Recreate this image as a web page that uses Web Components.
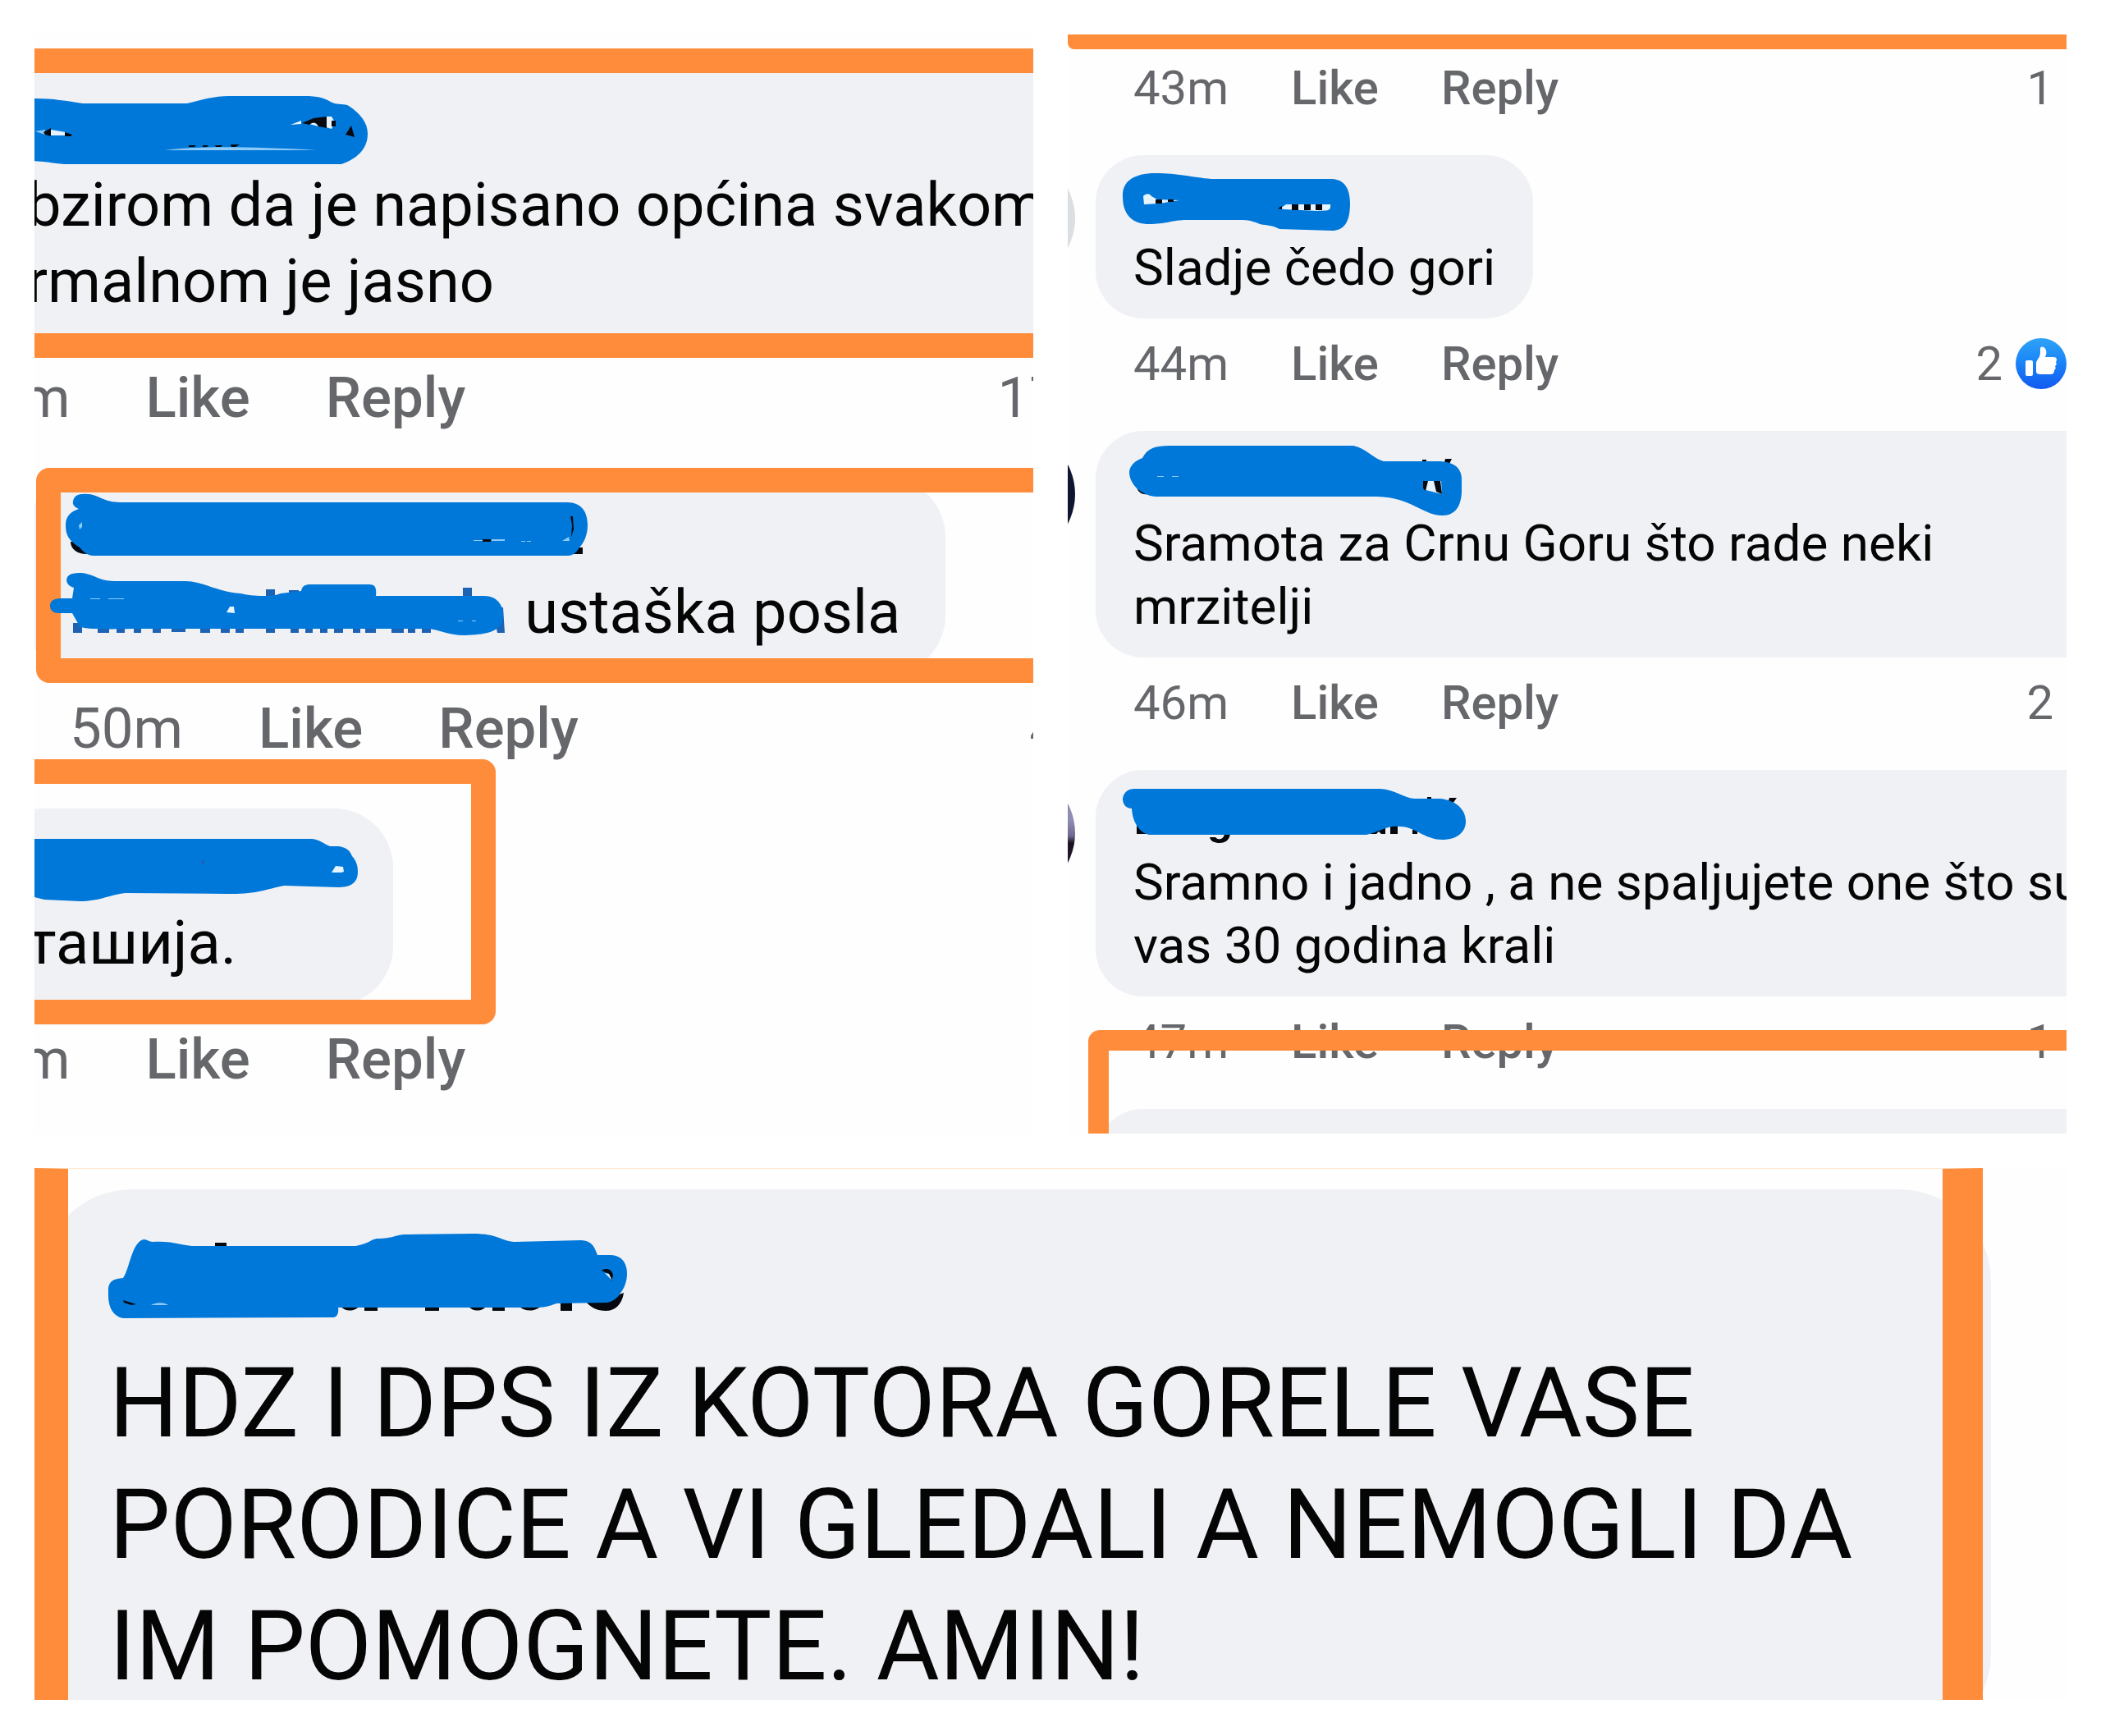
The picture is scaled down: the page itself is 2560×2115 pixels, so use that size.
<!DOCTYPE html>
<html lang="sr">
<head>
<meta charset="utf-8">
<title>Comments</title>
<style>
  body { margin: 0; background: #fff; font-family: Roboto, "Noto Sans", sans-serif; }
  .ink { display: block; overflow: visible; position: relative; z-index: 2; fill: #0078d9; }
  .ink.inline { display: inline-block; vertical-align: top; }
  .ink .k { fill: #06090f; }
  .ink .w { fill: #e6f4ff; }
  .ink .p { fill: #8ccbf7; }
  .ink .d { fill: #1e62b4; }
</style>
</head>
<body>
<comment-collage>
  <shot-panel size="m" style="--top:44px">
    <comment-item time="m" count="17" wide style="--indent:-64px;--meta-indent:47px;--f-top:-27px;--f-bottom:-17px;--f-left:-60px;--f-right:-160px" framed>
      <svg slot="name" class="ink" width="391" height="93" viewBox="33 110 391 93" aria-hidden="true">
        <path d="M30 121C50 118 76 122 101 126H228C245 122 260 117 279 117H370C388 117 394 119 405 125C412 128 420 126 425 129C440 139 448 150 448 163C448 182 434 194 416 200H85C62 200 64 196 30 196Z"/>
        <path class="p" d="M43 160L55 158V164Z"/><path class="w" d="M62 158L80 161V165L62 165Z"/><path class="k" d="M53 161L62 156V166L55 164ZM79 161L88 164L86 166H79Z"/>
        <path class="p" d="M200 183C235 178 300 178 386 183Z"/><path class="k" d="M230 177H239L237 179H230ZM247 177H254L252 179H247ZM262 177H271L269 179H263ZM281 176H292L287 179H282Z"/>
        <path class="w" d="M354 152L367 147V151ZM397 142H404L408 149L404 157L397 155ZM377 151C380 148 386 149 388 154Z"/><path class="k" d="M368 150L382 144L398 142V156L388 154C384 147 380 150 377 152ZM404 147H409V154H404ZM421 164L428 153L432 167Z"/>
      </svg>
      bzirom da je napisano općina svakom<br>rmalnom je jasno
    </comment-item>
    <comment-item time="50m" count="4" style="--indent:-12px;--f-top:-12px;--f-bottom:-10px;--f-left:2px;--f-right:-160px" framed>
      <svg slot="name" class="ink" width="640" height="93" viewBox="85 606 640 93" aria-hidden="true">
        <path class="k" d="M86 660H98L108 675C96 676 86 670 86 660ZM698 667H710V675H698Z"/>
        <path d="M89 611C90 604 95 602 101 602C112 601 118 605 126 608C133 611 140 612 150 612H691C709 612 716 624 716 640C716 652 711 662 706 667C701 675 697 677 691 677H113C104 676 100 670 97 667C84 659 80 652 80 640C80 632 83 624 96 620C91 618 88 615 89 611Z"/>
        <path class="p" d="M96 640L100 636V642L97 645ZM577 658H590V659H577ZM599 657H615V659H599ZM635 659H640V660H635ZM642 659H647V660H642ZM685 659L693 654L694 659Z"/><path class="k" d="M588 657H598V660H588ZM695 629H698L699 645L696 654L697 640Z"/>
      </svg>
      <svg class="ink inline" width="536" height="93" viewBox="85 699 536 93" aria-hidden="true">
        <path class="d" d="M89 759h11v12h-11zM119 759h14v12h-14zM142 759h10v12h-10zM163 759h9v12h-9zM186 759h10v12h-10zM209 759h17v11h-17zM244 759h12v12h-12zM269 759h11v12h-11zM287 759h10v12h-10zM324 759h11v12h-11zM354 759h10v12h-10zM372 759h9v12h-9zM390 759h9v12h-9zM407 759h11v12h-11zM430 759h9v12h-9zM445 759h13v12h-13zM477 759h15v12h-15zM497 759h9v12h-9zM514 759h11v12h-11zM600 740h13l2 31h-9zM324 718h11v12h-11zM352 719h12v8h-12zM564 716h11v14h-11z"/>
        <path d="M61 738C61 731 67 729 75 729H88L90 716C78 713 79 701 88 699C98 697 106 698 119 704C128 708 136 708 146 708H226C246 708 265 721 293 723C305 726 330 728 342 723L367 720C368 714 372 712 378 712H450C457 712 459 716 458 726H590C606 726 613 738 613 748C613 764 606 773 566 774C545 774 533 766 520 766H180C140 766 104 768 97 763L88 747H72C65 747 61 744 61 738Z"/>
        <path class="w" d="M276 746L280 739H285L286 747Z"/><path class="p" d="M110 729H122V730H110ZM132 729H151V730H132ZM558 756H564V757H558ZM575 756H580V757H575Z"/>
      </svg>
      ustaška posla
    </comment-item>
    <comment-item time="m" style="--indent:-64px;--meta-indent:47px;--f-top:-60px;--f-bottom:-23px;--f-left:-60px;--f-right:655px" framed>
      <svg slot="name" class="ink" width="391" height="93" viewBox="33 1009 391 93" aria-hidden="true">
        <path d="M30 1022H380C390 1023 394 1028 402 1031C410 1031 424 1029 429 1043C435 1050 436 1056 436 1062C436 1078 424 1081 412 1081L346 1079C325 1083 312 1090 275 1089L153 1088C130 1091 121 1098 97 1098L54 1096L30 1090Z"/>
        <path class="w" d="M404 1063L409 1055L418 1056L419 1062L416 1063Z"/><path class="d" d="M245 1050L249 1047V1054Z"/>
      </svg>
      ташија.
    </comment-item>
  </shot-panel>

  <shot-panel size="s" style="--top:10px" capped>
    <comment-item time="43m" count="1" style="--indent:34px" bare></comment-item>
    <comment-item time="44m" count="2" liked avatar style="--indent:-145px;--avatar:#dcdfe2">
      <svg slot="name" class="ink" width="280" height="77" viewBox="1381 210 280 77" aria-hidden="true">
        <path d="M1368 240C1367 222 1380 211 1408 211C1436 211 1452 216 1476 218H1623C1640 219 1645 232 1645 248C1645 270 1638 281 1623 281L1559 279C1550 274 1545 275 1535 273C1527 269 1520 268 1510 268H1443C1425 269 1420 273 1400 273C1375 273 1368 256 1368 240Z"/>
        <path class="w" d="M1393 239C1396 236 1400 235 1403 239L1410 243L1437 244L1412 248L1394 249Z"/><path class="k" d="M1408 243H1416V248H1408ZM1423 243H1430V246H1423Z"/>
        <path class="w" d="M1560 254L1567 249H1621C1622 258 1617 256 1605 257L1564 255Z"/><path class="k" d="M1557 254L1562 251V255ZM1574 249H1582V256H1574ZM1589 249H1597V256H1589ZM1603 249H1611V256H1603Z"/>
      </svg>
      Sladje čedo gori
    </comment-item>
    <comment-item time="46m" count="2" avatar wide style="--indent:-145px;--avatar:#101631">
      <svg slot="name" class="ink" width="400" height="77" viewBox="1381 546 400 77" aria-hidden="true">
        <path class="k" d="M1385 594L1398 602C1392 603 1387 600 1385 594ZM1733 560H1738V566H1733ZM1761 559H1769L1765 567H1759Z"/>
        <path d="M1376 575C1377 566 1384 561 1392 558C1398 546 1408 543 1425 543H1649C1664 546 1674 559 1686 562H1751C1774 562 1781 572 1781 584V600C1780 616 1774 628 1757 628C1734 628 1720 606 1678 605H1408C1388 603 1376 588 1376 575Z"/>
        <path class="w" d="M1739 586H1756L1757 602L1737 597Z"/><path class="k" d="M1734 586H1740L1737 598L1734 595ZM1747 586H1755L1757 602L1750 599Z"/>
        <path class="p" d="M1410 580H1418V581H1410ZM1428 580H1436V581H1428Z"/>
      </svg>
      Sramota za Crnu Goru što rade neki<br>mrzitelji
    </comment-item>
    <comment-item time="47m" count="1" avatar wide style="--indent:-145px;--avatar:linear-gradient(#8f8db4 40%,#6f6a92 52%,#1c1222 58%,#3a2838)">
      <svg slot="name" class="ink" width="400" height="77" viewBox="1381 959 400 77" aria-hidden="true">
        <path class="k" d="M1385 1004H1396L1402 1016H1385ZM1474 1014H1499C1499 1024 1492 1027 1486 1027C1480 1027 1475 1025 1474 1020L1481 1020C1484 1024 1491 1023 1492 1016H1474ZM1670 1016C1670 1008 1678 1005 1688 1006V1016H1683L1680 1013L1677 1016ZM1694 1004H1703V1016H1694ZM1721 1011H1727V1016H1721ZM1739 971H1744V977H1739ZM1766 972H1775L1770 979H1764Z"/>
        <path d="M1368 973C1369 965 1375 961 1382 961H1682C1700 962 1710 972 1723 973H1755C1774 975 1786 986 1786 1001C1786 1014 1775 1023 1757 1023C1736 1023 1724 1007 1706 1007C1690 1005 1680 1014 1665 1017H1400C1388 1014 1380 1002 1379 985C1372 985 1368 980 1368 973Z"/>
      </svg>
      Sramno i jadno , a ne spaljujete one što su<br>vas 30 godina krali
    </comment-item>
    <comment-item avatar wide cut style="--indent:-145px;--avatar:#fff;--f-top:-96px;--f-bottom:-60px;--f-left:25px;--f-right:-160px" framed></comment-item>
  </shot-panel>

  <shot-panel size="l" style="--top:26px">
    <comment-item whole style="--indent:7px;--f-top:-26px;--f-bottom:-60px;--f-left:0px;--f-right:102px;--f-width:1px 49px 0 41px;--f-top-color:#ffe6cc;--f-radius:0px" framed>
      <svg slot="name" class="ink" width="640" height="148" viewBox="133 1489 640 148" aria-hidden="true">
        <path class="k" d="M262 1515H276V1522H262ZM415 1588H440C436 1600 420 1600 415 1592ZM444 1588H460V1598H444ZM518 1588H535V1598H518ZM571 1588H594C592 1600 575 1600 571 1592ZM600 1588H615V1598H600ZM632 1588H663C655 1600 640 1600 632 1592ZM683 1586H697V1598H683ZM715 1585L740 1584L760 1576C758 1590 750 1598 738 1598C728 1598 720 1594 715 1588Z"/>
        <path d="M132 1575C131 1563 137 1559 150 1558C158 1547 160 1515 175 1511C180 1511 181 1514 186 1514C210 1512 222 1519 239 1519H433C450 1516 450 1512 459 1510C480 1510 482 1505 494 1505L576 1504C608 1504 610 1513 627 1514L708 1512C722 1513 724 1520 728 1530L744 1530C760 1531 764 1542 764 1553C764 1565 758 1574 757 1575C752 1583 748 1586 740 1588L678 1589C668 1593 662 1594 652 1594H412C413 1600 411 1606 406 1606L150 1607C138 1605 131 1594 132 1575Z"/>
        <path class="k" d="M150 1585L166 1590L160 1591L151 1588ZM733 1549C738 1545 746 1547 747 1555L745 1562L742 1553Z"/><path class="w" d="M737 1552L742 1553L746 1561Z"/><path class="p" d="M184 1591C190 1588 198 1587 205 1591Z"/>
      </svg>
      HDZ I DPS IZ KOTORA GORELE VASE<br>PORODICE A VI GLEDALI A NEMOGLI DA<br>IM POMOGNETE. AMIN!
    </comment-item>
  </shot-panel>
</comment-collage>

<template id="collage">
  <style>
    :host { display: grid; grid-template-columns: 1fr 1fr; gap: 42px; padding: 42px; }
    ::slotted([size="l"]) { grid-column: 1 / -1; }
  </style>
  <slot></slot>
</template>

<template id="panel">
  <style>
    :host { display: block; position: relative; overflow: hidden; min-width: 0; background: #fefefe; color: #050505; aspect-ratio: 1217 / 1339; }
    :host([size="s"]) { --text: 62px; --line: 77px; --meta: 58px; --row: 62px; --row-top: 24px; --row-bottom: 51px; --gap: 76px; --pad: 21px 46px 24px; --pad-x: 46px; --radius: 58px; --stroke: 25px; --corner: 14px; --count-end: 16px; }
    :host([size="m"]) { --text: 74px; --line: 93px; --meta: 69px; --row: 74px; --row-top: 29px; --row-bottom: 60px; --gap: 92px; --pad: 24px 55px 30px; --pad-x: 55px; --radius: 72px; --stroke: 30px; --corner: 16px; --count-end: -34px; }
    :host([size="l"]) { --text: 118px; --line: 148px; --pad: 39px 84px 46px; --radius: 112px; --stroke: 49px; aspect-ratio: 2476 / 648; }
    .list { display: flex; flex-direction: column; padding-top: var(--top); }
    .cap { display: none; }
    :host([capped]) .cap { display: block; position: absolute; inset: 0 0 auto 0; height: 18px; background: #ff8c3a; border-bottom-left-radius: 8px; }
  </style>
  <div class="cap"></div>
  <div class="list"><slot></slot></div>
</template>

<template id="item">
  <style>
    :host { display: block; }
    .body { display: flex; gap: 25px; position: relative; }
    .bubble-row { display: flex; align-items: flex-start; gap: 25px; margin-left: var(--indent); flex: 1; min-width: 0; }
    .avatar { display: none; flex: none; width: 154px; height: 154px; border-radius: 50%; background: var(--avatar); }
    :host([avatar]) .avatar { display: block; }
    .bubble { padding: var(--pad); border-radius: var(--radius); background: #f0f1f5; }
    :host([wide]) .bubble { flex: 1; margin-right: -100px; }
    :host([whole]) .bubble { flex: 1; margin-right: 92px; }
    :host([cut]) .bubble { min-height: 154px; }
    .text { margin: 0; font-size: var(--text); line-height: var(--line); white-space: nowrap; }
    .frame { display: none; }
    :host([framed]) .frame { display: block; position: absolute; z-index: 1; pointer-events: none; box-sizing: border-box;
      top: var(--f-top); bottom: var(--f-bottom); left: var(--f-left); right: var(--f-right);
      border: var(--stroke) solid #ff8c3a; border-width: var(--f-width, var(--stroke)); border-top-color: var(--f-top-color, #ff8c3a);
      border-radius: var(--f-radius, var(--corner)); }
    .meta { display: flex; align-items: center; gap: var(--gap); height: var(--row); padding: var(--row-top) 0 var(--row-bottom);
      margin-left: calc(var(--indent) + var(--meta-indent, var(--pad-x))); font-size: var(--meta); line-height: var(--row); color: #65676b; }
    :host([avatar]) .meta { margin-left: calc(var(--indent) + var(--pad-x) + 179px); }
    button { margin: 0; padding: 0; border: 0; background: none; font: inherit; font-weight: 500; color: inherit; }
    .count { display: flex; align-items: center; gap: 16px; margin-left: auto; margin-right: var(--count-end); }
    :host([liked]) .count { margin-right: 0; }
    .thumb { display: none; width: 62px; height: 62px; }
    :host([liked]) .thumb { display: block; }
  </style>
  <div class="body">
    <div class="bubble-row">
      <div class="avatar"></div>
      <div class="bubble"><slot name="name"></slot><p class="text"><slot></slot></p></div>
    </div>
    <div class="frame"></div>
  </div>
  <div class="meta">
    <span class="time"></span>
    <button type="button">Like</button>
    <button type="button">Reply</button>
    <span class="count"><span class="num"></span>
      <svg class="thumb" viewBox="0 0 62 62" aria-hidden="true">
        <defs><linearGradient id="g" x1="0" y1="0" x2="0" y2="1"><stop offset="0" stop-color="#2fa3f7"/><stop offset=".45" stop-color="#1b86f8"/><stop offset="1" stop-color="#1259f0"/></linearGradient></defs>
        <circle cx="31" cy="31" r="31" fill="url(#g)"/>
        <rect x="12" y="27" width="9" height="19" rx="2" fill="#fff"/>
        <path d="M25 31C25 26 30 24 30 18V13C30 9 36 10 37 15C38 18 37 20 36 23H46C50 23 51 26 49 29C50 31 50 33 48 34C49 36 49 38 47 39C47 42 46 44 42 44H30C27 44 25 43 25 41Z" fill="#fff"/>
      </svg>
    </span>
  </div>
</template>

<script>
  const stamp = (host, id) => {
    const root = host.attachShadow({ mode: "open" });
    root.append(document.getElementById(id).content.cloneNode(true));
    return root;
  };
  customElements.define("comment-collage", class extends HTMLElement {
    constructor() { super(); stamp(this, "collage"); }
  });
  customElements.define("shot-panel", class extends HTMLElement {
    constructor() { super(); stamp(this, "panel"); }
  });
  customElements.define("comment-item", class extends HTMLElement {
    constructor() { super(); stamp(this, "item"); }
    connectedCallback() {
      const root = this.shadowRoot;
      root.querySelector(".time").textContent = this.getAttribute("time") || "";
      root.querySelector(".num").textContent = this.getAttribute("count") || "";
      // "whole" and "cut" items have no action row; "bare" items are only that row.
      if (this.hasAttribute("whole") || this.hasAttribute("cut")) root.querySelector(".meta").remove();
      if (this.hasAttribute("bare")) root.querySelector(".body").remove();
    }
  });
</script>
</body>
</html>
